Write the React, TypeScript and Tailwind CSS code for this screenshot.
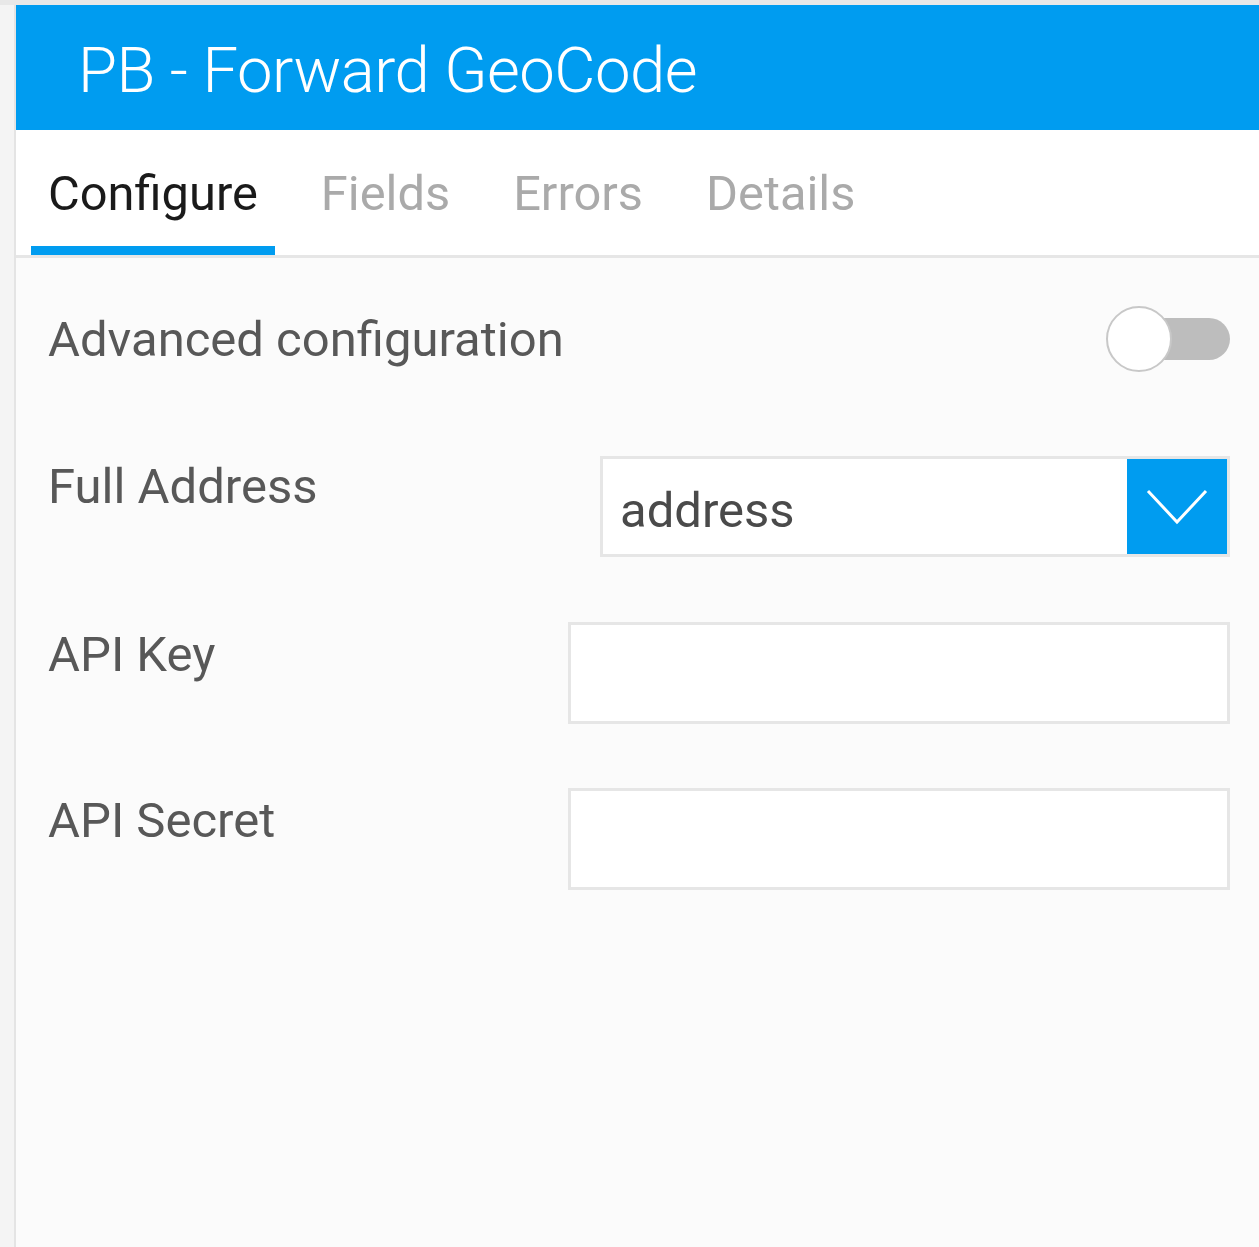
import React from "react";

const tabs = ["Configure", "Fields", "Errors", "Details"];

export default function App() {
  return (
    <div className="w-[1259px] h-[1247px] flex flex-col bg-[#f4f4f4] overflow-hidden font-['Roboto',sans-serif]">
      <div className="h-[5px] bg-[#e8e8e8]" />
      <div className="flex flex-1">
        <div className="w-[14px] bg-[#f4f4f4]" />
        <div className="flex-1 flex flex-col border-l-[2px] border-[#e4e4e4] bg-[#fbfbfb]">
          {/* header */}
          <div className="h-[125px] bg-[#009cf0] flex items-center pl-[62px] pt-[6px]">
            <h1 className="text-white text-[63.4px] font-light tracking-[-0.5px] leading-none">PB - Forward GeoCode</h1>
          </div>

          {/* tabs */}
          <div className="h-[128px] bg-white border-b-[3px] border-[#e6e6e6] flex items-end pl-[15px] gap-[29px]">
            {tabs.map((t, i) => (
              <div
                key={t}
                className={
                  i === 0
                    ? "h-full flex items-center px-[17px] border-b-[9px] border-[#009cf0] pt-[12px] text-[#1a1a1a] text-[48.8px]"
                    : "h-full flex items-center px-[17px] border-b-[9px] border-transparent pt-[12px] text-[#aaaaaa] text-[48.8px]"
                }
              >
                {t}
              </div>
            ))}
          </div>

          {/* form */}
          <div className="flex flex-col pl-[32px] pr-[29px] text-[#585858] text-[49px]">
            <div className="flex items-center justify-between mt-[46px] h-[70px]">
              <span className="pt-[2px]">Advanced configuration</span>
              <div className="relative w-[124px] h-[68px] flex items-center">
                <div className="absolute right-0 w-[92px] h-[42px] rounded-full bg-[#bdbdbd]" />
                <div className="absolute left-0 w-[66px] h-[66px] rounded-full bg-white border-[2px] border-[#c8c8c8]" />
              </div>
            </div>

            <div className="flex justify-between mt-[82px]">
              <span className="pt-[6px] leading-none">Full Address</span>
              <div className="w-[630px] h-[101px] border-[3px] border-[#e6e6e6] bg-white flex">
                <div className="flex-1 flex items-center pl-[17px] pt-[8px] text-[#4a4a4a] text-[49px]">address</div>
                <div className="w-[100px] bg-[#009cf0] flex items-center justify-center">
                  <svg width="62" height="36" viewBox="0 0 62 36" fill="none">
                    <path d="M2 2 L31 33 L60 2" stroke="white" strokeWidth="3" />
                  </svg>
                </div>
              </div>
            </div>

            <div className="flex justify-between mt-[65px]">
              <span className="pt-[8px] leading-none">API Key</span>
              <div className="w-[662px] h-[102px] border-[3px] border-[#e6e6e6] bg-white" />
            </div>

            <div className="flex justify-between mt-[64px]">
              <span className="pt-[8px] leading-none">API Secret</span>
              <div className="w-[662px] h-[102px] border-[3px] border-[#e6e6e6] bg-white" />
            </div>
          </div>
        </div>
      </div>
    </div>
  );
}
